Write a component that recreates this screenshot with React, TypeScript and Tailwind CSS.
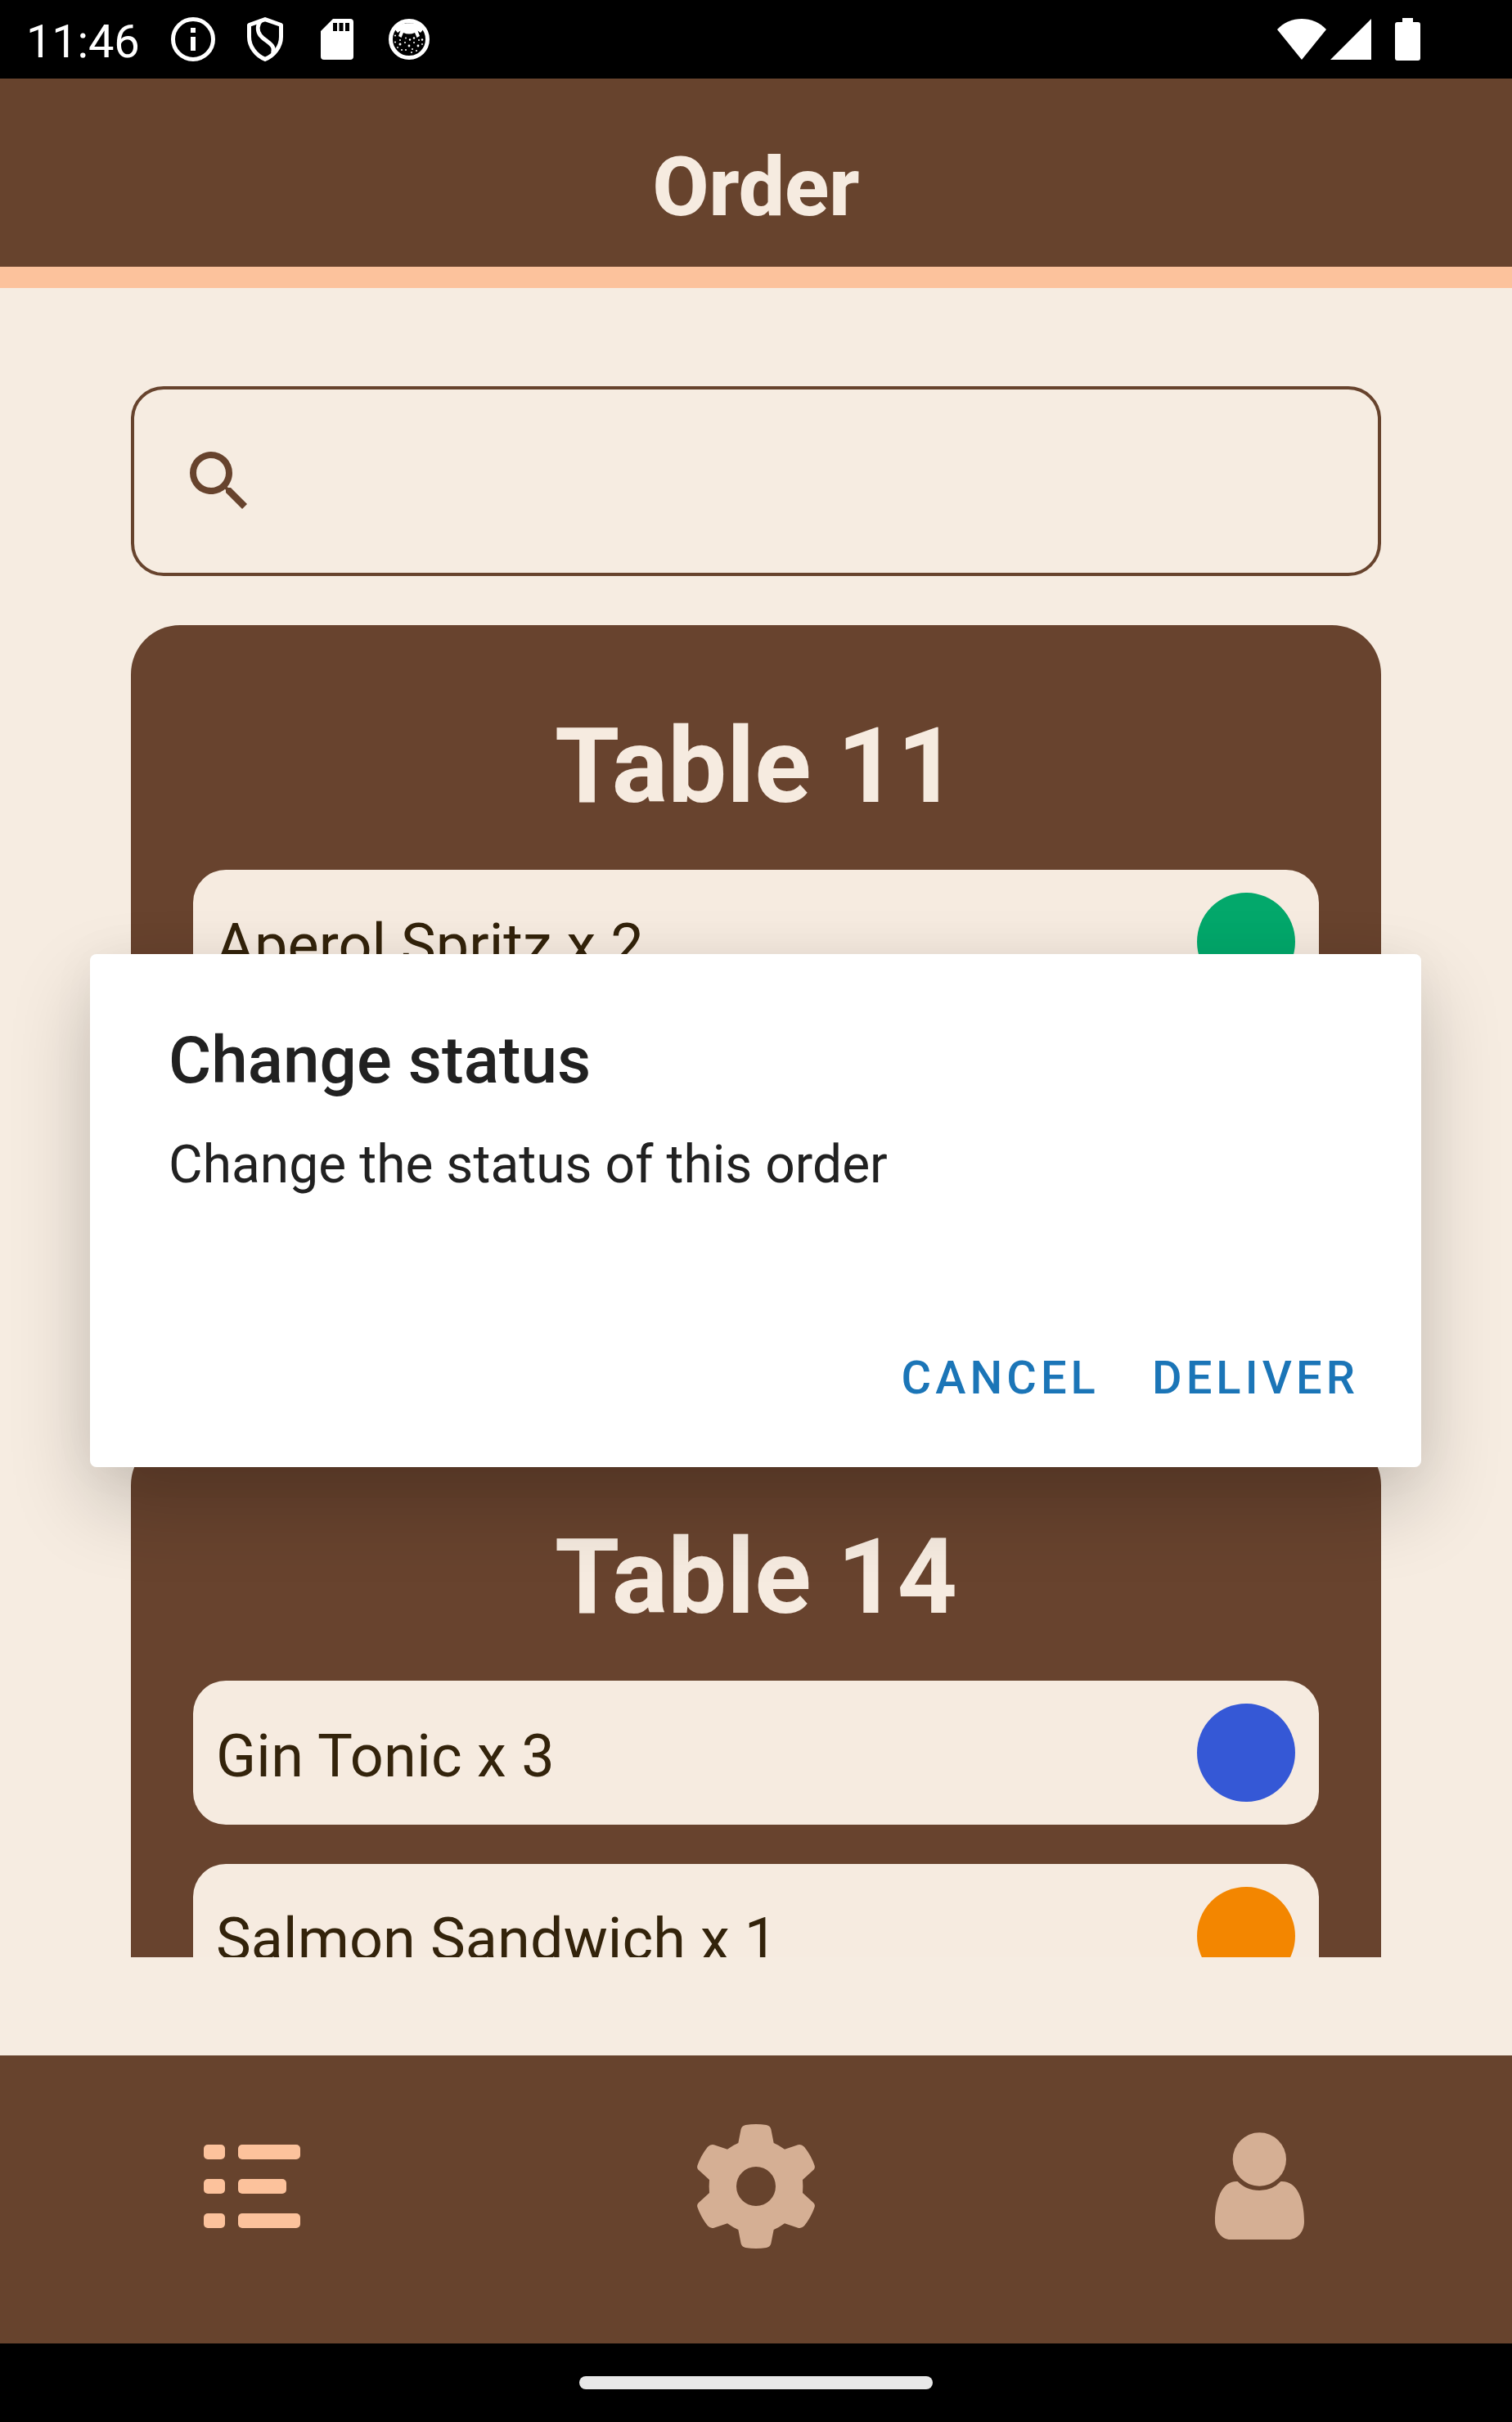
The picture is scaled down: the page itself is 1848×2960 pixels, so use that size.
import React from "react";

type Item = { label: string; color: string; tracking: string };

const tables: { name: string; height: string; items: Item[] }[] = [
  {
    name: "Table 11",
    height: "h-[943px]",
    items: [{ label: "Aperol Spritz x 2", color: "bg-[#03a86b]", tracking: "tracking-[0.050px]" }],
  },
  {
    name: "Table 14",
    height: "h-[943px]",
    items: [
      { label: "Gin Tonic x 3", color: "bg-[#3558d6]", tracking: "tracking-[0.300px]" },
      { label: "Salmon Sandwich x 1", color: "bg-[#f38600]", tracking: "tracking-[0.100px]" },
    ],
  },
];

function StatusBar() {
  return (
    <div className="flex h-24 items-center justify-between bg-black pl-8 pr-[112px] text-white">
      <div className="flex items-center">
        <span className="w-[177px] pt-[6px] text-[56px] leading-[66px] tracking-[-0.200px]">11:46</span>
        <svg className="h-[54px] w-[54px]" viewBox="0 0 54 54" fill="none">
          <circle cx="27" cy="27" r="24.5" stroke="white" strokeWidth="5" />
          <path d="M24 13h6v6h-6zM24 24h6v17h-6z" fill="white" />
        </svg>
        <svg className="ml-[39px] h-[54px] w-[44px]" viewBox="0 0 44 54" fill="none" stroke="white">
          <path d="M22 2.6L41.5 9.5V24C41.5 36 33 47 22 51.4C11 47 2.5 36 2.5 24V9.5Z" strokeWidth="5" strokeLinejoin="round" />
          <path d="M17 4C12 10 12.500 17 16 22C21 28.500 31 32 32 38C32.300 40 32 42 31.500 44" strokeWidth="5" />
        </svg>
        <svg className="ml-[46px] h-[50px] w-[40px]" viewBox="0 0 40 50">
          <path
            fill="white"
            fillRule="evenodd"
            d="M15 0H36Q40 0 40 4V46Q40 50 36 50H4Q0 50 0 46V15ZM15 5V15H20V5ZM22.500 5V15H27.500V5ZM30 5V15H35V5Z"
          />
        </svg>
        <svg className="ml-[43px] h-[50px] w-[50px]" viewBox="0 0 50 50">
          <circle cx="25" cy="25" r="22.500" fill="none" stroke="white" strokeWidth="5" />
          <path d="M7 12C13 3 37 3 43 12L39 17L35.500 14.500L38 21L34.500 23L32 17Q25 20 18 17L15.500 23L12 21L14.500 14.500L11 17Z" fill="white" />
          <g fill="white">
            <circle cx="8" cy="20.500" r="1" /><circle cx="14" cy="26" r="1" /><circle cx="21" cy="23.500" r="0.900" />
            <circle cx="26" cy="25.500" r="1.200" /><circle cx="31" cy="23.500" r="1.200" /><circle cx="37" cy="26" r="1" />
            <circle cx="41" cy="25.500" r="1.200" /><circle cx="8" cy="28.500" r="1" /><circle cx="14" cy="31" r="1.500" />
            <circle cx="20" cy="29" r="1" /><circle cx="25" cy="33" r="1.400" /><circle cx="31" cy="29" r="1" />
            <circle cx="36" cy="33" r="1.400" /><circle cx="41" cy="31" r="0.900" /><circle cx="11" cy="35" r="0.900" />
            <circle cx="16" cy="38" r="1" /><circle cx="21" cy="38" r="1" /><circle cx="29" cy="37" r="1" />
            <circle cx="34" cy="39" r="1" /><circle cx="28" cy="41" r="1" />
          </g>
        </svg>
      </div>
      <div className="flex items-center">
        <svg className="h-[50px] w-[60px]" viewBox="0 0 60 50">
          <path d="M0 13C16-4.300 44-4.300 60 13L30 50Z" fill="white" />
        </svg>
        <svg className="ml-[5px] h-[50px] w-[50px]" viewBox="0 0 50 50">
          <path d="M50 0V50H0Z" fill="white" />
        </svg>
        <svg className="ml-[29px] h-[52px] w-[31px]" viewBox="0 0 31 52">
          <path d="M9 0H22V5H28Q31 5 31 8V49Q31 52 28 52H3Q0 52 0 49V8Q0 5 3 5H9Z" fill="white" />
        </svg>
      </div>
    </div>
  );
}

function OrderItem({ label, color, tracking }: Item) {
  return (
    <div className="flex h-44 shrink-0 items-center justify-between rounded-[40px] bg-[#f6ebe0] pl-[28px] pr-[29px]">
      <span className={"pt-[9px] text-[72px] leading-[84px] whitespace-nowrap text-[#33230b] " + tracking}>{label}</span>
      <span className={"h-[120px] w-[120px] rounded-full " + color} />
    </div>
  );
}

function Dialog() {
  return (
    <div className="absolute left-[110px] top-[1166px] flex h-[627px] w-[1627px] flex-col rounded-[8px] bg-white pl-24 pr-[76px] pt-[83px] shadow-[0_44px_100px_rgba(0,0,0,0.2),0_0_60px_rgba(0,0,0,0.04)]">
      <h2 className="text-[80px] font-medium leading-[94px] tracking-[0.050px] text-[#212121]">Change status</h2>
      <p className="mt-[43px] text-[64px] leading-[76px] tracking-[0.050px] text-[#212121]">Change the status of this order</p>
      <div className="mt-[189px] flex justify-end gap-[64px] text-[56px] font-medium leading-[66px] tracking-[5.100px] text-[#1b75b7]">
        <button>CANCEL</button>
        <button>DELIVER</button>
      </div>
    </div>
  );
}

export default function App() {
  return (
    <div className="relative flex h-[2960px] w-[1848px] flex-col overflow-hidden bg-[#f6ece1] font-['Roboto',sans-serif]">
      <StatusBar />
      <header className="flex h-64 shrink-0 justify-center border-b-[26px] border-[#fcc29c] bg-[#67432d] pt-[74px]">
        <h1 className="text-[100px] font-extrabold leading-[118px] text-[#f6ebe0]">Order</h1>
      </header>
      <main className="flex h-[2160px] shrink-0 flex-col px-40 pt-[120px] pb-[120px]">
        <div className="flex h-[232px] shrink-0 items-center rounded-[40px] border-4 border-[#67432d] pl-14">
          <svg className="h-24 w-24" viewBox="0 0 24 24" fill="#67432d">
            <path d="M9.500,3A6.500,6.500 0 0,1 16,9.500C16,11.110 15.410,12.590 14.440,13.730L14.710,14H15.500L20.500,19L19,20.500L14,15.500V14.710L13.730,14.440C12.590,15.410 11.110,16 9.500,16A6.500,6.500 0 0,1 3,9.500A6.500,6.500 0 0,1 9.500,3M9.500,5C7,5 5,7 5,9.500C5,12 7,14 9.500,14C12,14 14,12 14,9.500C14,7 12,5 9.500,5Z" />
          </svg>
        </div>
        <div className="mt-[60px] flex min-h-0 flex-1 flex-col gap-12 overflow-hidden">
          {tables.map((t) => (
            <section key={t.name} className={"flex shrink-0 flex-col gap-12 rounded-[60px] bg-[#68432e] px-[76px] pt-[97px] " + t.height}>
              <h2 className="mb-1 text-center text-[128px] font-bold leading-[150px] text-[#f6ebe0]">{t.name}</h2>
              {t.items.map((i) => (
                <OrderItem key={i.label} {...i} />
              ))}
            </section>
          ))}
        </div>
      </main>
      <nav className="grid h-[352px] shrink-0 grid-cols-3 justify-items-center bg-[#67432d] pt-[50px]">
        <svg className="h-[220px] w-[220px]" viewBox="0 0 220 220" fill="#fcc29c">
          <rect x="51" y="59" width="26" height="18" rx="5" />
          <rect x="93" y="59" width="76" height="18" rx="5" />
          <rect x="51" y="101" width="26" height="18" rx="5" />
          <rect x="93" y="101" width="59" height="18" rx="5" />
          <rect x="51" y="143" width="26" height="18" rx="5" />
          <rect x="93" y="143" width="76" height="18" rx="5" />
        </svg>
        <svg className="h-[220px] w-[220px]" viewBox="-330 -330 660 660" fill="#d5af94">
          <path
            fillRule="evenodd"
            d="M-65-159L-55-210Q-52-222-38-225Q0-231 38-225Q52-222 55-210L65-159Q86-150 105-136L154-152Q166-156 177-145Q202-114 215-76Q218-66 208-58L171-24Q173 0 171 24L208 58Q218 66 215 76Q202 114 177 145Q166 156 154 152L105 136Q86 150 65 159L55 210Q52 222 38 225Q0 231-38 225Q-52 222-55 210L-65 159Q-86 150-105 136L-154 152Q-166 156-177 145Q-202 114-215 76Q-218 66-208 58L-171 24Q-173 0-171-24L-208-58Q-218-66-215-76Q-202-114-177-145Q-166-156-154-152L-105-136Q-86-150-65-159ZM72 0A72 72 0 1 0-72 0A72 72 0 1 0 72 0Z"
          />
        </svg>
        <svg className="h-[220px] w-[200px]" viewBox="0 6 600 660" fill="#d5af94">
          <circle cx="298" cy="237" r="98" />
          <path d="M218 318Q250 351 298 351Q346 351 376 318C434 314 462 380 462 465C462 505 436 531 405 531H191C160 531 135 500 135 465C135 380 163 314 218 318Z" />
        </svg>
      </nav>
      <footer className="flex h-24 shrink-0 items-center justify-center bg-black">
        <div className="h-4 w-[432px] rounded-full bg-[#e8e8e8]" />
      </footer>
      <Dialog />
    </div>
  );
}
